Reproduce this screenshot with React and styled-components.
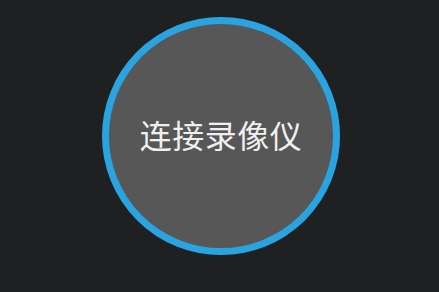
import React from "react";
import styled, { createGlobalStyle } from "styled-components";

const GlobalStyle = createGlobalStyle`
  html, body {
    margin: 0;
    padding: 0;
    background: #1f2022;
  }
`;

const Screen = styled.div`
  width: 100vw;
  height: 100vh;
  box-sizing: border-box;
  display: flex;
  justify-content: center;
  align-items: flex-start;
  padding: 17px 0 0 3px;
  background: #1f2022;
  overflow: hidden;
`;

const ConnectButton = styled.button`
  width: 238px;
  height: 238px;
  box-sizing: border-box;
  border-radius: 50%;
  border: 7px solid #2aa3e1;
  background: #565756;
  color: #f0f0f0;
  font-family: "Noto Sans CJK SC", "Noto Sans", sans-serif;
  font-size: 32px;
  font-weight: 400;
  letter-spacing: 0.5px;
  display: flex;
  align-items: center;
  justify-content: center;
  padding: 0 0 4px 0;
  cursor: pointer;
`;

export default function App() {
  return (
    <>
      <GlobalStyle />
      <Screen>
        <ConnectButton>连接录像仪</ConnectButton>
      </Screen>
    </>
  );
}
